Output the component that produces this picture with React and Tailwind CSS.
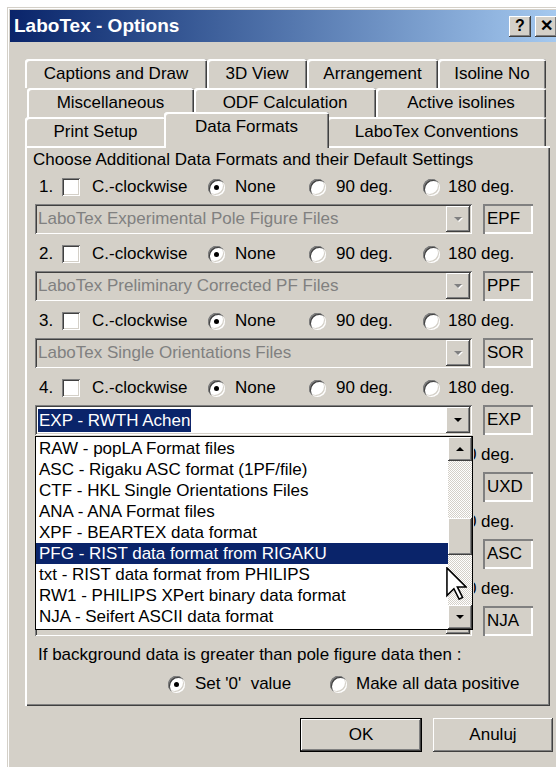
import React from "react";

// classic 3D edges
const raised = "shadow-[inset_-1px_-1px_#404040,inset_1px_1px_#ffffff,inset_-2px_-2px_#808080,inset_2px_2px_#d4d0c8]";
const sunken = "shadow-[inset_1px_1px_#808080,inset_-1px_-1px_#ffffff,inset_2px_2px_#404040,inset_-2px_-2px_#d4d0c8]";
const etched = "shadow-[inset_2px_2px_#808080,inset_-2px_-2px_#ffffff]";

// rows 5..7 sit under the open drop-down, only their right end shows
const formats = [
  { n: "1.", file: "LaboTex Experimental Pole Figure Files", ext: "EPF" },
  { n: "2.", file: "LaboTex Preliminary Corrected PF Files", ext: "PPF" },
  { n: "3.", file: "LaboTex Single Orientations Files", ext: "SOR" },
  { n: "4.", file: "EXP - RWTH Achen", ext: "EXP", active: true },
  { n: "5.", ext: "UXD", covered: true },
  { n: "6.", ext: "ASC", covered: true },
  { n: "7.", ext: "NJA", covered: true },
];

const listItems = [
  "RAW - popLA Format files",
  "ASC - Rigaku ASC format (1PF/file)",
  "CTF - HKL Single Orientations Files",
  "ANA - ANA Format files",
  "XPF - BEARTEX data format",
  "PFG - RIST data format from RIGAKU",
  "txt - RIST data format from PHILIPS",
  "RW1 - PHILIPS XPert binary data format",
  "NJA - Seifert ASCII data format",
];

function Radio({ on }) {
  return (
    <span className="inline-flex w-[17px] h-[17px] shrink-0 items-center justify-center rounded-full bg-white shadow-[inset_1px_1px_#808080,inset_2px_2px_#404040,inset_-1px_-1px_#ffffff,inset_-2px_-2px_#d4d0c8]">
      {on && <span className="w-[5px] h-[5px] rounded-full bg-black" />}
    </span>
  );
}

function Arrow({ up, dim }) {
  return (
    <svg width="11" height="7" viewBox="0 0 11 7">
      {dim && <path d={up ? "M2 6h8L6 2z" : "M2 2h8L6 6z"} fill="#ffffff" />}
      <path d={up ? "M1 5h8L5 1z" : "M1 1h8L5 5z"} fill={dim ? "#808080" : "#000000"} />
    </svg>
  );
}

function Tab({ w, label, active }) {
  if (active) {
    return (
      <div className={`${w} relative z-10 -mx-[2px] -mb-[2px] h-[36px] flex justify-center pt-[5px] rounded-t-[3px] bg-[#d4d0c8] shadow-[inset_2px_2px_#ffffff,inset_-1px_0_#404040,inset_-2px_0_#808080]`}>
        {label}
      </div>
    );
  }
  return (
    <div className={`${w} h-[29px] flex items-center justify-center rounded-t-[3px] bg-[#d4d0c8] shadow-[inset_2px_2px_#ffffff,inset_-1px_0_#404040,inset_-2px_0_#808080]`}>
      {label}
    </div>
  );
}

function Combo({ text, active }) {
  return (
    <div className={`flex h-[30px] w-[437px] p-[2px] ${sunken} ${active ? "bg-white" : "bg-[#d4d0c8]"}`}>
      <div className="flex-1 flex items-center pl-[1px] overflow-hidden whitespace-nowrap">
        {active ? (
          <span className="bg-[#0a246a] text-white px-[1px] leading-[23px]">{text}</span>
        ) : (
          text && <span className="text-[#808080]">{text}</span>
        )}
      </div>
      <div className={`w-[24px] h-[26px] flex items-center justify-center bg-[#d4d0c8] ${raised}`}>
        <Arrow dim={!active} />
      </div>
    </div>
  );
}

function FormatRow({ f }) {
  return (
    <div className="mb-[3px]">
      {f.covered ? (
        <div className="h-[34px] flex items-center pl-[449px] whitespace-nowrap">
          <div className="w-[50px] overflow-hidden">
            <span className="block -ml-[26px]">180 deg.</span>
          </div>
        </div>
      ) : (
        <div className="h-[34px] flex items-center pl-[14px] whitespace-nowrap">
          <span className="w-[23px]">{f.n}</span>
          <span className={`w-[18px] h-[18px] shrink-0 bg-white ${sunken}`} />
          <span className="ml-[12px] w-[116px]">C.-clockwise</span>
          <Radio on />
          <span className="ml-[10px] w-[74px]">None</span>
          <Radio />
          <span className="ml-[10px] w-[87px]">90 deg.</span>
          <Radio />
          <span className="ml-[8px]">180 deg.</span>
        </div>
      )}
      <div className="flex pl-[10px]">
        <Combo text={f.file} active={f.active} />
        <div className={`ml-[11px] w-[50px] h-[30px] flex items-center pl-[4px] ${etched}`}>{f.ext}</div>
      </div>
    </div>
  );
}

function DropList() {
  return (
    <div className="absolute left-[10px] top-[290px] w-[438px] h-[194px] border border-black bg-white flex z-20">
      <div className="flex-1 pt-[1px]">
        {listItems.map((t) => (
          <div
            key={t}
            className={`h-[21px] leading-[21px] pl-[3px] whitespace-nowrap ${t.startsWith("PFG") ? "bg-[#0a246a] text-white" : ""}`}
          >
            {t}
          </div>
        ))}
      </div>
      <div className="w-[24px] flex flex-col">
        <div className={`h-[24px] flex items-center justify-center bg-[#d4d0c8] ${raised}`}>
          <Arrow up />
        </div>
        <div className="h-[57px] bg-[image:repeating-conic-gradient(#d4d0c8_0%_25%,#ffffff_0%_50%)] bg-[length:2px_2px]" />
        <div className={`h-[37px] bg-[#d4d0c8] ${raised}`} />
        <div className="flex-1 bg-[image:repeating-conic-gradient(#d4d0c8_0%_25%,#ffffff_0%_50%)] bg-[length:2px_2px]" />
        <div className={`h-[24px] flex items-center justify-center bg-[#d4d0c8] ${raised}`}>
          <Arrow />
        </div>
      </div>
    </div>
  );
}

function Cursor() {
  return (
    <svg className="absolute left-[421px] top-[421px] z-30" width="21" height="33" viewBox="0 0 12 19">
      <path d="M0.5 0.5V16.5L4.5 12.5L7.5 18.5L9.5 17.5L6.5 11.5H11.5Z" fill="#ffffff" stroke="#000000" strokeWidth="0.9" />
    </svg>
  );
}

export default function App() {
  return (
    <div className="w-[556px] h-[767px] overflow-hidden bg-white font-['Liberation_Sans',Arial,sans-serif] text-[17px] leading-[20px] text-black">
      <div className="ml-[7px] mt-[7px] w-[555px] h-[800px] p-[3px] bg-[#d4d0c8] shadow-[inset_1px_1px_#d4d0c8,inset_2px_2px_#ffffff,inset_-1px_-1px_#404040,inset_-2px_-2px_#808080]">
        {/* title bar */}
        <div className="h-[32px] flex items-center pl-[4px] pr-[2px] bg-linear-to-r from-[#0a246a] to-[#a6caf0]">
          <span className="text-white font-bold text-[19px]">LaboTex - Options</span>
          <div className="flex-1" />
          <div className={`w-[22px] h-[21px] flex items-center justify-center bg-[#d4d0c8] font-bold text-[16px] ${raised}`}>?</div>
          <div className={`ml-[4px] w-[22px] h-[21px] flex items-center justify-center bg-[#d4d0c8] font-bold text-[16px] ${raised}`}>✕</div>
        </div>

        <div className="pl-[15px] pt-[17px]">
          {/* tab rows */}
          <div className="flex">
            <Tab w="w-[182px]" label="Captions and Draw" />
            <Tab w="w-[100px]" label="3D View" />
            <Tab w="w-[131px]" label="Arrangement" />
            <Tab w="w-[108px]" label="Isoline No" />
          </div>
          <div className="flex ml-[2px]">
            <Tab w="w-[167px]" label="Miscellaneous" />
            <Tab w="w-[182px]" label="ODF Calculation" />
            <Tab w="w-[170px]" label="Active isolines" />
          </div>
          <div className="flex h-[29px] items-end">
            <Tab w="w-[141px]" label="Print Setup" />
            <Tab w="w-[165px]" label="Data Formats" active />
            <Tab w="w-[219px]" label="LaboTex Conventions" />
          </div>

          {/* page */}
          <div className="relative w-[525px] h-[560px] pt-[4px] shadow-[inset_2px_2px_#ffffff,inset_-1px_-1px_#404040,inset_-2px_-2px_#808080]">
            <div className="pl-[8px] h-[20px]">Choose Additional Data Formats and their Default Settings</div>
            {formats.map((f) => (
              <FormatRow key={f.n} f={f} />
            ))}
            <div className="mt-[9px] pl-[13px]">If background data is greater than pole figure data then :</div>
            <div className="mt-[9px] h-[20px] flex items-center pl-[143px] whitespace-pre">
              <Radio on />
              <span className="ml-[10px] w-[135px]">Set '0'  value</span>
              <Radio />
              <span className="ml-[9px]">Make all data positive</span>
            </div>
            <DropList />
            <Cursor />
          </div>

          {/* buttons */}
          <div className="flex mt-[12px] ml-[275px] gap-[11px]">
            <div className="w-[122px] h-[34px] border border-black">
              <div className={`h-full flex items-center justify-center ${raised}`}>OK</div>
            </div>
            <div className={`w-[120px] h-[34px] flex items-center justify-center ${raised}`}>Anuluj</div>
          </div>
        </div>
      </div>
    </div>
  );
}
